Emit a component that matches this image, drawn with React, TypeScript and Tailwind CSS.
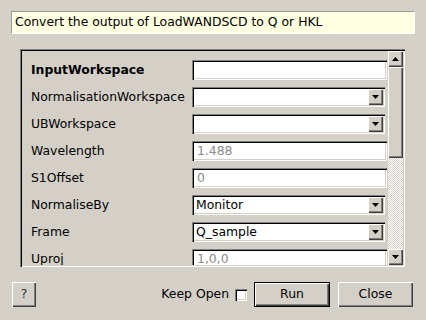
import React from "react";

const raised =
  "shadow-[inset_1px_1px_0_#ffffff,inset_-1px_-1px_0_#404040,inset_-2px_-2px_0_#808080]";
const sunken =
  "shadow-[inset_1px_1px_0_#808080,inset_2px_2px_0_#000000,inset_-1px_-1px_0_#ffffff,inset_-2px_-2px_0_#d4d0c8]";

function Tri({ up = false }: { up?: boolean }) {
  return (
    <svg width="7" height="4" viewBox="0 0 7 4" className="block">
      {up ? (
        <polygon points="3.5,0 7,4 0,4" fill="#000" />
      ) : (
        <polygon points="0,0 7,0 3.5,4" fill="#000" />
      )}
    </svg>
  );
}

function LineEdit({ value, gray = false }: { value?: string; gray?: boolean }) {
  return (
    <div
      className={`w-[195px] h-[20px] bg-white ${sunken} flex items-center pl-[5px] ${
        gray ? "text-[#8c8c8c]" : "text-black"
      }`}
    >
      {value}
    </div>
  );
}

function Combo({ value }: { value?: string }) {
  return (
    <div className={`w-[193px] h-[20px] bg-white ${sunken} flex items-center pl-[4px] pr-[2px] py-[2px]`}>
      <span className="flex-1">{value}</span>
      <div className={`w-[15px] h-[16px] bg-[#d4d0c8] ${raised} flex items-center justify-center`}>
        <Tri />
      </div>
    </div>
  );
}

const rows: { label: string; bold?: boolean; kind: "edit" | "combo"; value?: string; gray?: boolean }[] = [
  { label: "InputWorkspace", bold: true, kind: "edit" },
  { label: "NormalisationWorkspace", kind: "combo" },
  { label: "UBWorkspace", kind: "combo" },
  { label: "Wavelength", kind: "edit", value: "1.488", gray: true },
  { label: "S1Offset", kind: "edit", value: "0", gray: true },
  { label: "NormaliseBy", kind: "combo", value: "Monitor" },
  { label: "Frame", kind: "combo", value: "Q_sample" },
  { label: "Uproj", kind: "edit", value: "1,0,0", gray: true },
];

function Button({ children, def = false, w }: { children: React.ReactNode; def?: boolean; w: string }) {
  return (
    <div className={`${w} h-[25px] ${def ? "border border-black" : ""}`}>
      <div className={`w-full h-full bg-[#d4d0c8] ${raised} flex items-center justify-center`}>
        {children}
      </div>
    </div>
  );
}

export default function App() {
  return (
    <div className="w-[426px] h-[320px] bg-[#d4d0c8] flex flex-col text-[12.4px] text-black overflow-hidden font-['DejaVu_Sans',sans-serif]">
      <div className="mt-[11px] ml-[11px] w-[404px] h-[23px] bg-[#ffffe1] border border-t-[#9a9a9a] border-l-[#9a9a9a] border-b-white border-r-white flex items-center pl-[3px]">
        Convert the output of LoadWANDSCD to Q or HKL
      </div>

      <div className={`mt-[15px] ml-[20px] w-[385px] h-[218px] ${sunken} p-[2px] flex`}>
        <div className="flex-1 overflow-hidden pl-[9px] pt-[9px] flex flex-col gap-[7px]">
          {rows.map((r) => (
            <div key={r.label} className="flex items-center h-[20px] shrink-0">
              <div className={`w-[161px] whitespace-nowrap ${r.bold ? "font-bold" : ""}`}>{r.label}</div>
              {r.kind === "edit" ? <LineEdit value={r.value} gray={r.gray} /> : <Combo value={r.value} />}
            </div>
          ))}
        </div>
        <div className="w-[15px] flex flex-col">
          <div className={`h-[16px] bg-[#d4d0c8] ${raised} flex items-center justify-center`}>
            <Tri up />
          </div>
          <div className={`h-[91px] bg-[#d4d0c8] ${raised}`} />
          <div className="flex-1 bg-[image:repeating-conic-gradient(#ffffff_0%_25%,#d4d0c8_0%_50%)] bg-[length:2px_2px]" />
          <div className={`h-[16px] bg-[#d4d0c8] ${raised} flex items-center justify-center`}>
            <Tri />
          </div>
        </div>
      </div>

      <div className="mt-[15px] h-[25px] flex items-center pl-[12px] pr-[13px]">
        <Button w="w-[24px]">
          <span className="text-[#333]">?</span>
        </Button>
        <div className="flex-1" />
        <span>Keep Open</span>
        <div className={`ml-[6px] w-[12px] h-[12px] bg-white ${sunken}`} />
        <div className="ml-[7px]">
          <Button def w="w-[76px]">Run</Button>
        </div>
        <div className="ml-[8px]">
          <Button w="w-[75px]">Close</Button>
        </div>
      </div>
    </div>
  );
}
